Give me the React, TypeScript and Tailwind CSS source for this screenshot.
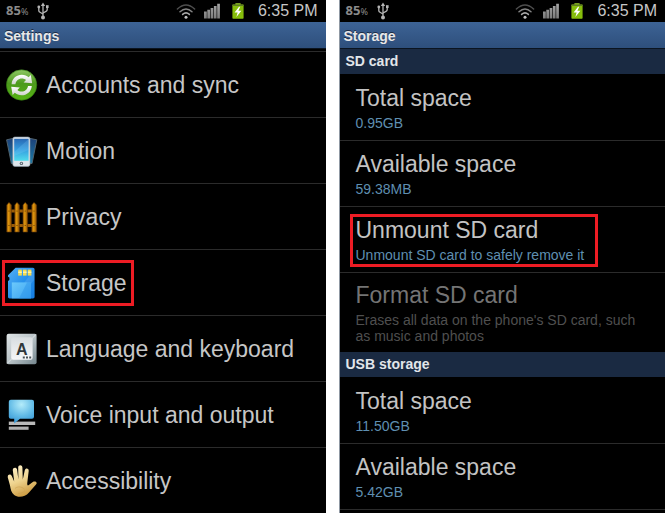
import type { ReactNode } from 'react'

function SyncIcon() {
  return (
    <svg viewBox="0 0 32 32" className="size-8 shrink-0" aria-hidden="true">
      <defs>
        <linearGradient id="sync-bg" x1="0" y1="0" x2="0" y2="1">
          <stop offset="0" stopColor="#8fc765" />
          <stop offset="0.45" stopColor="#4c9a1c" />
          <stop offset="1" stopColor="#57b413" />
        </linearGradient>
        <linearGradient id="sync-arrow" x1="0" y1="0" x2="0" y2="1">
          <stop offset="0" stopColor="#ffffff" />
          <stop offset="1" stopColor="#cfd4cc" />
        </linearGradient>
      </defs>
      <circle cx="15.6" cy="16" r="15.2" fill="url(#sync-bg)" stroke="#2f7a10" strokeWidth="0.6" />
      <path
        d="M5.6 15.2 C6 9.5 10.5 5.8 15.8 5.8 C18.8 5.8 21 6.8 22.6 8.2 L24.8 6 L26.2 14.2 L17.6 13.4 L20 11 C18.8 10 17.4 9.5 15.8 9.5 C12.4 9.5 10 11.8 9.4 15.2 Z"
        fill="url(#sync-arrow)"
      />
      <path
        d="M25.8 17 C25.4 22.6 20.9 26.3 15.6 26.3 C12.8 26.3 10.6 25.3 8.8 23.8 L6.6 26 L5.2 17.8 L13.8 18.6 L11.4 21.1 C12.6 22.1 14 22.6 15.6 22.6 C19 22.6 21.4 20.3 22 17 Z"
        fill="url(#sync-arrow)"
      />
    </svg>
  )
}

function MotionIcon() {
  return (
    <svg viewBox="0 0 32 32" className="size-8 shrink-0" aria-hidden="true">
      <defs>
        <linearGradient id="motion-screen" x1="0" y1="0" x2="0" y2="1">
          <stop offset="0" stopColor="#2868b4" />
          <stop offset="0.5" stopColor="#359fe0" />
          <stop offset="1" stopColor="#51dcec" />
        </linearGradient>
        <linearGradient id="motion-back" x1="0" y1="0" x2="0" y2="1">
          <stop offset="0" stopColor="#1d3f78" />
          <stop offset="1" stopColor="#1b7ca6" />
        </linearGradient>
      </defs>
      <path d="M0.6 4.8 L10 2.8 V28 L5.4 28.6 Z" fill="url(#motion-back)" stroke="#50626e" strokeWidth="1" />
      <path d="M30.8 4.8 L21 2.8 V28 L26 28.6 Z" fill="url(#motion-back)" stroke="#50626e" strokeWidth="1" />
      <rect x="6.8" y="2" width="17.2" height="29.4" rx="2" fill="#dde4ea" stroke="#8c9aa8" strokeWidth="0.6" />
      <rect x="8.2" y="3.8" width="14.4" height="22" fill="url(#motion-screen)" />
      <path d="M22.6 4 V15 L8.2 21 V17 Z" fill="#8bd7ff" opacity="0.2" />
      <circle cx="15.4" cy="28.4" r="1.7" fill="#4e5a64" />
      <rect x="14.7" y="27.7" width="1.4" height="1.4" fill="#d5dde5" />
    </svg>
  )
}

function PrivacyIcon() {
  return (
    <svg viewBox="0 0 32 32" className="size-8 shrink-0" aria-hidden="true">
      <defs>
        <linearGradient id="fence" x1="0" y1="0" x2="1" y2="0">
          <stop offset="0" stopColor="#b06c08" />
          <stop offset="0.4" stopColor="#df970e" />
          <stop offset="1" stopColor="#8a4d02" />
        </linearGradient>
      </defs>
      <path d="M1 8.5 H30 V11.5 H1 Z M1 23 H30 V26 H1 Z" fill="#9a5b06" />
      <path d="M0.8 4 L3 1.4 L5.4 4 V31 H0.8 Z" fill="url(#fence)" stroke="#64390a" strokeWidth="0.6" />
      <path d="M8.8 4 L11 1.4 L13.4 4 V31 H8.8 Z" fill="url(#fence)" stroke="#64390a" strokeWidth="0.6" />
      <path d="M17 4 L19.2 1.4 L21.6 4 V31 H17 Z" fill="url(#fence)" stroke="#64390a" strokeWidth="0.6" />
      <path d="M25.8 4 L28 1.4 L30.6 4 V31 H25.8 Z" fill="url(#fence)" stroke="#64390a" strokeWidth="0.6" />
      <g fill="#5e3504">
        <circle cx="3" cy="10" r="0.6" />
        <circle cx="11" cy="10" r="0.6" />
        <circle cx="19.2" cy="10" r="0.6" />
        <circle cx="28" cy="10" r="0.6" />
        <circle cx="3" cy="24.5" r="0.6" />
        <circle cx="11" cy="24.5" r="0.6" />
        <circle cx="19.2" cy="24.5" r="0.6" />
        <circle cx="28" cy="24.5" r="0.6" />
      </g>
    </svg>
  )
}

function StorageIcon() {
  return (
    <svg viewBox="0 0 32 32" className="size-8 shrink-0" aria-hidden="true">
      <defs>
        <linearGradient id="card" x1="0" y1="0" x2="1" y2="1">
          <stop offset="0" stopColor="#55b0f5" />
          <stop offset="0.5" stopColor="#2791ec" />
          <stop offset="1" stopColor="#147ce0" />
        </linearGradient>
        <linearGradient id="card-label" x1="0" y1="0" x2="1" y2="1">
          <stop offset="0" stopColor="#6cc9fb" />
          <stop offset="1" stopColor="#3aa3f2" />
        </linearGradient>
      </defs>
      <path
        d="M9.6 0.8 H27 Q28.6 0.8 28.6 2.4 V30 Q28.6 31.4 27 31.4 H3.6 Q2 31.4 2 30 V14 L3.4 13 V10.6 L2 9.8 V8.2 Z"
        fill="url(#card)"
      />
      <path d="M28 3 V13 L14 31 H6 Z" fill="#ffffff" opacity="0.1" />
      <rect x="5.8" y="15.4" width="19.2" height="16" fill="url(#card-label)" />
      <path d="M25 15.4 V31.4 H13 L21 15.4 Z" fill="#1c86e6" opacity="0.35" />
      <rect x="12.2" y="2.6" width="3.6" height="6" fill="#f8dc4d" />
      <rect x="17" y="2.6" width="3.6" height="6" fill="#f8dc4d" />
      <rect x="21.8" y="2.6" width="3.6" height="6" fill="#f8dc4d" />
      <path d="M12.2 4.6 H15.8 V6 H12.2 Z M17 4.6 H20.6 V6 H17 Z M21.8 4.6 H25.4 V6 H21.8 Z" fill="#fff3a8" />
    </svg>
  )
}

function KeyboardIcon() {
  return (
    <svg viewBox="0 0 32 32" className="size-8 shrink-0" aria-hidden="true">
      <defs>
        <linearGradient id="key" x1="0" y1="0" x2="1" y2="1">
          <stop offset="0" stopColor="#dfe4e6" />
          <stop offset="0.5" stopColor="#b9c3c7" />
          <stop offset="1" stopColor="#74868d" />
        </linearGradient>
        <linearGradient id="key-top" x1="0" y1="0" x2="0" y2="1">
          <stop offset="0" stopColor="#d8dde0" />
          <stop offset="1" stopColor="#f6f7f8" />
        </linearGradient>
      </defs>
      <rect x="0.6" y="0.8" width="30" height="30.4" rx="2" fill="url(#key)" />
      <path d="M1 30.6 L6 25.6 M30 1.4 L25.6 6" stroke="#e6eaec" strokeWidth="0.8" />
      <rect x="5.2" y="4.2" width="21.4" height="22.6" rx="2" fill="url(#key-top)" />
      <text x="10" y="21.6" fontFamily="Liberation Sans, sans-serif" fontSize="16" fontWeight="700" fill="#30373a">
        A
      </text>
      <path d="M16.8 23.4 h2 v2 h-2 Z M20 23.4 h2 v2 h-2 Z M23.2 23.4 h2 v2 h-2 Z" fill="#4a5256" />
    </svg>
  )
}

function VoiceIcon() {
  return (
    <svg viewBox="0 0 32 32" className="size-8 shrink-0" aria-hidden="true">
      <defs>
        <radialGradient id="bubble" cx="0.5" cy="0.2" r="0.8">
          <stop offset="0" stopColor="#b4ecfa" />
          <stop offset="0.6" stopColor="#62bbe6" />
          <stop offset="1" stopColor="#3b9ad6" />
        </radialGradient>
      </defs>
      <rect x="2.8" y="22.6" width="26.4" height="3.4" fill="#b9b9b9" />
      <rect x="2.8" y="27.6" width="19.8" height="3.2" fill="#b0b0b0" />
      <path
        d="M4.8 0.8 H26 Q28 0.8 28 2.8 V17.8 Q28 19.8 26 19.8 H14 L8.2 24.4 V19.8 H4.8 Q2.8 19.8 2.8 17.8 V2.8 Q2.8 0.8 4.8 0.8 Z"
        fill="url(#bubble)"
      />
    </svg>
  )
}

function HandIcon() {
  return (
    <svg viewBox="0 0 32 32" className="size-8 shrink-0" aria-hidden="true">
      <defs>
        <linearGradient id="hand" x1="0" y1="0" x2="0.4" y2="1">
          <stop offset="0" stopColor="#fff3cf" />
          <stop offset="0.55" stopColor="#efd591" />
          <stop offset="1" stopColor="#cf9f47" />
        </linearGradient>
      </defs>
      <path
        d="M8.2 30 C5.2 27.6 4.6 23.8 4 20.4 L1.8 12.4 C1.3 9.3 4.8 8.4 5.9 11.2 L8.2 16.6 L6.8 5.2 C6.7 2.2 10.6 2 11.1 4.8 L12.4 14.6 L12.2 2.6 C12.3 -0.4 16.2 -0.4 16.4 2.6 L16.8 14.6 L18.8 5.2 C19.5 2.6 23 3.2 22.7 6 L21.2 18.6 C21.2 20.4 21.8 20.8 22.8 20 L26.8 17 C29.2 15.6 32 17.4 30 19.4 L23 27.4 C19 32.2 12 33 8.2 30 Z"
        fill="url(#hand)"
      />
      <path
        d="M9 23.4 C12 21.2 15.8 21.4 18.4 24.2 M12 28.4 C14.6 28.6 17 27.6 19 25.6"
        fill="none"
        stroke="#c99c4c"
        strokeWidth="0.9"
        opacity="0.6"
      />
    </svg>
  )
}

function UsbGlyph() {
  return (
    <svg viewBox="0 0 12 18" className="h-[18px] w-3" aria-hidden="true">
      <g fill="none" stroke="#b5b5b5" strokeWidth="1.3">
        <path d="M6 3 V15" />
        <path d="M1.8 6 V8.4 Q1.8 9.6 3 10.2 L6 12" />
        <path d="M10.2 5.6 V7.6 Q10.2 8.8 9 9.4 L6 11" />
      </g>
      <path d="M6 0.4 L8.2 4 H3.8 Z" fill="#b5b5b5" />
      <circle cx="6" cy="15.4" r="2" fill="#b5b5b5" />
      <circle cx="1.8" cy="5" r="1.4" fill="#b5b5b5" />
      <rect x="9" y="3.2" width="2.6" height="2.8" fill="#b5b5b5" />
    </svg>
  )
}

function StatusBar() {
  return (
    <div className="flex h-[22px] items-center pr-2 pl-1.5">
      <span className="font-['Noto_Sans'] text-[13px] leading-5 font-bold text-[#8a8a8a]">
        85<span className="text-[9px] font-normal">%</span>
      </span>
      <span className="ml-[9px]">
        <UsbGlyph />
      </span>
      <div className="ml-auto flex items-center">
        <svg viewBox="0 0 20 16" className="h-4 w-5" aria-hidden="true">
          <g fill="none" strokeLinecap="round" strokeWidth="1.5">
            <path d="M1.4 6 Q10 -2 18.6 6" stroke="#4f4f4f" />
            <path d="M4 8.8 Q10 3.2 16 8.8" stroke="#858585" />
            <path d="M6.6 11.4 Q10 8.4 13.4 11.4" stroke="#a8a8a8" />
          </g>
          <circle cx="10" cy="14.2" r="1.5" fill="#c0c0c0" />
        </svg>
        <svg viewBox="0 0 16 16" className="ml-2 h-4 w-4" aria-hidden="true">
          <defs>
            <linearGradient id="bars" x1="0" y1="0" x2="0" y2="1">
              <stop offset="0" stopColor="#a5a5a5" />
              <stop offset="1" stopColor="#7d7d7d" />
            </linearGradient>
          </defs>
          <path
            d="M0 8.4 h2.8 V15.6 H0 Z M3.3 6.8 h2.7 V15.6 h-2.7 Z M6.6 5 h2.7 V15.6 h-2.7 Z M9.9 3 h2.7 V15.6 h-2.7 Z M13.2 0.8 h2.7 V15.6 h-2.7 Z"
            fill="url(#bars)"
          />
        </svg>
        <svg viewBox="0 0 12 16" className="ml-3 h-4 w-3" aria-hidden="true">
          <rect x="3.4" y="0" width="5.2" height="2" fill="#779d22" />
          <rect x="0.4" y="1.6" width="11.2" height="14.2" rx="0.8" fill="#86bd0b" />
          <rect x="0.4" y="1.6" width="11.2" height="1.4" fill="#5f7c24" />
          <path d="M7 3.8 L2.6 9.6 H5.6 L4.4 14 L9.4 7.8 H6.4 L8.2 3.8 Z" fill="#ffffff" />
        </svg>
        <time className="ml-3.5 text-base leading-5 text-[#c6c6c6]">6:35 PM</time>
      </div>
    </div>
  )
}

function TitleBar({ children }: { children: ReactNode }) {
  return (
    <h1 className="h-[27px] border-b border-[#0b1420] bg-linear-to-b from-[#3d6395] to-[#2e4f7c] pl-1 text-sm leading-7 font-bold text-[#e8e8e8] text-shadow-[0_-1px_0_#1c2c44]">
      {children}
    </h1>
  )
}

function SectionHeader({ children }: { children: ReactNode }) {
  return <h2 className="h-[25px] bg-[#1a2a42] pl-1.5 text-sm leading-6 font-bold text-[#e2e6ea]">{children}</h2>
}

const SETTINGS: { label: string; icon: ReactNode; marked?: boolean }[] = [
  { label: 'Accounts and sync', icon: <SyncIcon /> },
  { label: 'Motion', icon: <MotionIcon /> },
  { label: 'Privacy', icon: <PrivacyIcon /> },
  { label: 'Storage', icon: <StorageIcon />, marked: true },
  { label: 'Language and keyboard', icon: <KeyboardIcon /> },
  { label: 'Voice input and output', icon: <VoiceIcon /> },
  { label: 'Accessibility', icon: <HandIcon /> },
]

type StorageRowProps = {
  title: string
  summary: string
  marked?: boolean
  disabled?: boolean
}

function StorageRow({ title, summary, marked, disabled }: StorageRowProps) {
  return (
    <li className="border-t border-[#2b2b2b] first:border-t-0 first:pt-px">
      <button
        type="button"
        disabled={disabled}
        className="block w-full pt-2 pr-3 pb-[9px] pl-4 text-left text-[#c3c3c3] disabled:pt-[7px] disabled:pb-2 disabled:text-[#747474]"
      >
        <span className="relative inline-block align-top">
          <span className="block text-[23px] leading-[30px]">{title}</span>
          <span className={`block pt-0.5 text-sm leading-4 ${disabled ? 'text-[#4f4f4f]' : 'text-[#5f8fb1]'}`}>
            {summary}
          </span>
          {marked && <span className="absolute -top-px -right-3.5 -bottom-1 -left-1.5 border-3 border-[#ed1c24]" />}
        </span>
      </button>
    </li>
  )
}

export default function App() {
  return (
    <main className="flex gap-[13px] bg-white font-['Liberation_Sans',Arial,sans-serif]">
      <section className="flex-1 bg-black">
        <StatusBar />
        <TitleBar>Settings</TitleBar>
        <ul className="pt-0.5">
          {SETTINGS.map((s) => (
            <li key={s.label} className="border-t border-[#2b2b2b]">
              <a href="#" className="flex h-[65px] items-center pl-1.5">
                <span className="relative flex items-center gap-2">
                  {s.icon}
                  <span className="text-[23px] leading-8 text-[#c6c6c6]">{s.label}</span>
                  {s.marked && (
                    <span className="absolute -inset-y-[7px] -right-[7px] -left-1 border-3 border-[#ed1c24]" />
                  )}
                </span>
              </a>
            </li>
          ))}
        </ul>
      </section>

      <section className="flex-1 border-l border-[#8f98a3] bg-black">
        <StatusBar />
        <TitleBar>Storage</TitleBar>
        <SectionHeader>SD card</SectionHeader>
        <ul>
          <StorageRow title="Total space" summary="0.95GB" />
          <StorageRow title="Available space" summary="59.38MB" />
          <StorageRow title="Unmount SD card" summary="Unmount SD card to safely remove it" marked />
          <StorageRow
            title="Format SD card"
            summary="Erases all data on the phone's SD card, such as music and photos"
            disabled
          />
        </ul>
        <SectionHeader>USB storage</SectionHeader>
        <ul className="border-b border-[#2b2b2b]">
          <StorageRow title="Total space" summary="11.50GB" />
          <StorageRow title="Available space" summary="5.42GB" />
        </ul>
      </section>
    </main>
  )
}
